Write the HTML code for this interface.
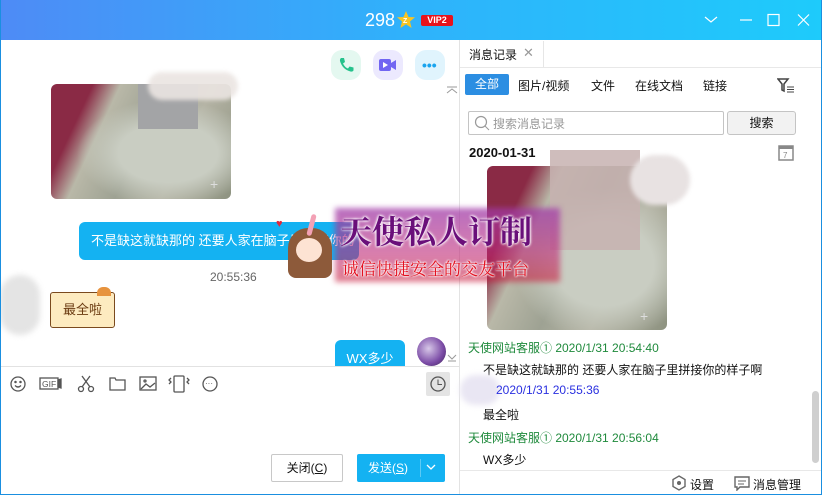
<!DOCTYPE html>
<html><head><meta charset="utf-8"><style>
*{margin:0;padding:0;box-sizing:border-box}
body{width:822px;height:495px;overflow:hidden;background:#fff;font-family:"Liberation Sans","Noto Sans CJK SC",sans-serif;position:relative;font-size:12px;color:#111}
.a{position:absolute}
.win{position:absolute;left:0;top:0;width:822px;height:495px;border:1px solid #1a8fe0;border-top:none}
.title{left:0;top:0;width:822px;height:40px;background:linear-gradient(90deg,#4e8bf6,#2fb2fb 50%,#1ecbfb)}
.img{background:
radial-gradient(ellipse at 65% 60%,#c9cdc2 0 30%,transparent 55%),
linear-gradient(115deg,#8a2a45 0 18%,#b9b8a8 30%,#9ea293 50%,#b4b3a4 70%,#8d9280 100%);border-radius:6px;overflow:hidden}
.ico{stroke:#555;fill:none;stroke-width:1.3}
.g{color:#1f8a3c}
</style></head><body>
<div class="a title"></div>
<div class="a" style="left:365px;top:10px;color:#fff;font-size:18px">298</div>
<svg class="a" style="left:397px;top:11px" width="18" height="17" viewBox="0 0 18 17"><polygon points="9,0 11.5,6 18,6.3 13,10.5 14.6,17 9,13.3 3.4,17 5,10.5 0,6.3 6.5,6" fill="#f7c423"/><text x="6" y="12" font-size="7" fill="#fff" font-weight="bold">Z</text></svg>
<div class="a" style="left:421px;top:15px;width:32px;height:11px;background:#e8131b;border-radius:2px;color:#fff;font-size:9px;font-weight:bold;line-height:11px;text-align:center">VIP2</div>
<svg class="a" style="left:704px;top:13px" width="110" height="14"><g stroke="#fff" stroke-width="1.2" fill="none"><path d="M1 4 l6 5 l6-5"/><path d="M36 7 h12"/><rect x="64" y="1.5" width="11" height="11"/><path d="M94 1.5 l11 11 M105 1.5 l-11 11"/></g></svg>

<div class="a" style="left:459px;top:40px;width:1px;height:455px;background:#e3e3e3"></div>
<div class="a" style="left:331px;top:50px;width:30px;height:30px;border-radius:11px;background:#e4f8f0"></div>
<svg class="a" style="left:338px;top:57px" width="16" height="16" viewBox="0 0 16 16"><path d="M3 1 l3 0 l1 4 l-2 1.5 q2 4 5 5 l1.5-2 l4 1 l0 3 q-1 1.5-3 1 q-8-2-10.5-10.5 q-.3-2 1-3z" fill="#26c28c"/></svg>
<div class="a" style="left:373px;top:50px;width:30px;height:30px;border-radius:11px;background:#ece9fe"></div>
<svg class="a" style="left:379px;top:58px" width="18" height="14"><rect x="0" y="1" width="12" height="12" rx="2" fill="#7165f2"/><path d="M12 5 l5-3 v10 l-5-3z" fill="#7165f2"/><path d="M4 4 l5 3 l-5 3z" fill="#fff"/></svg>
<div class="a" style="left:415px;top:50px;width:30px;height:30px;border-radius:11px;background:#e0f4fd"></div>
<div class="a" style="left:422px;top:57px;color:#1aa4ee;font-size:14px;font-weight:bold">•••</div>
<svg class="a" style="left:446px;top:86px" width="12" height="8"><path d="M1 1 h10 M1 7 l5-4 l5 4" stroke="#999" fill="none"/></svg>

<div class="a img" style="left:51px;top:84px;width:180px;height:115px"></div>
<div class="a" style="left:138px;top:84px;width:60px;height:45px;background:#a3a4a6"></div>
<div class="a" style="left:148px;top:72px;width:90px;height:28px;border-radius:14px;background:#ebe5e2;opacity:.9;filter:blur(2px)"></div>
<div class="a" style="left:210px;top:176px;color:#ddd;font-size:14px">+</div>

<div class="a" style="left:79px;top:222px;width:280px;height:38px;background:#14b2f2;border-radius:6px;color:#fff;font-size:13px;line-height:38px;padding-left:12px">不是缺这就缺那的 还要人家在脑子里拼接你的</div>
<div class="a" style="left:210px;top:270px;color:#666;font-size:12px">20:55:36</div>
<div class="a" style="left:0;top:275px;width:40px;height:60px;border-radius:20px;background:#e4e4e4;filter:blur(3px)"></div>
<div class="a" style="left:50px;top:292px;width:65px;height:36px;background:#fdebc0;border:1.5px solid #7a4a1e;border-radius:3px;color:#6a3a10;font-size:13px;line-height:34px;text-align:center">最全啦</div>
<div class="a" style="left:97px;top:287px;width:14px;height:9px;background:#e7933e;border-radius:6px 6px 0 0"></div>
<div class="a" style="left:335px;top:340px;width:70px;height:26px;background:#14b2f2;border-radius:6px 6px 0 0;color:#fff;font-size:13px;line-height:38px;text-align:center;overflow:hidden">WX多少</div>
<div class="a" style="left:417px;top:337px;width:29px;height:29px;border-radius:50%;background:radial-gradient(circle at 40% 40%,#d7c7e8,#7a4aa5 60%,#3b2450)"></div>
<svg class="a" style="left:447px;top:354px" width="10" height="8"><path d="M1 1 l4 4 l4-4 M1 7 h8" stroke="#999" fill="none"/></svg>

<div class="a" style="left:1px;top:366px;width:458px;height:1px;background:#e2e2e2"></div>
<svg class="a" style="left:8px;top:374px" width="220" height="20"><g class="ico"><circle cx="10" cy="10" r="7"/><path d="M7 11.5 q3 3 6 0"/><circle cx="7.5" cy="8" r=".6"/><circle cx="12.5" cy="8" r=".6"/>
<rect x="32" y="4" width="18" height="11"/><text x="34" y="13" font-size="8.5" fill="#555" stroke="none">GIF</text><path d="M50 6 l3-1 v9 l-3-1z" fill="#555"/>
<circle cx="73" cy="15" r="2.5"/><circle cx="83" cy="15" r="2.5"/><path d="M74 13 l8-11 M82 13 l-8-11"/>
<path d="M102 4 h5 l1 2 h9 v10 h-15z"/><rect x="132" y="3" width="16" height="13"/><path d="M133 15 l5-5 l4 3 l5-4"/><circle cx="137" cy="7" r="1"/>
<rect x="166" y="2" width="10" height="16" rx="1"/><path d="M163 4 l-2 2 l2 2 l-2 2 M179 4 l2 2 l-2 2 l2 2"/>
<circle cx="202" cy="10" r="7"/></g><text x="197" y="12" font-size="8" fill="#555">···</text></svg>
<div class="a" style="left:426px;top:372px;width:24px;height:24px;background:#e4e4e4;border-radius:2px"></div>
<svg class="a" style="left:429px;top:375px" width="18" height="18"><circle cx="9" cy="9" r="7" stroke="#555" fill="none" stroke-width="1.3"/><path d="M9 4.5 v5 h4" stroke="#555" fill="none"/></svg>
<div class="a" style="left:271px;top:454px;width:72px;height:28px;border:1px solid #c8c8c8;border-radius:2px;text-align:center;line-height:26px;font-size:12px">关闭(<u>C</u>)</div>
<div class="a" style="left:357px;top:454px;width:88px;height:28px;background:#14b2f2;border-radius:2px;color:#fff;font-size:12px;line-height:28px;padding-left:11px">发送(<u>S</u>)</div>
<div class="a" style="left:420px;top:459px;width:1px;height:18px;background:#5ccaf5"></div>
<svg class="a" style="left:426px;top:464px" width="10" height="7"><path d="M1 1 l4 4 l4-4" stroke="#fff" fill="none" stroke-width="1.3"/></svg>

<div class="a" style="left:460px;top:67px;width:361px;height:1px;background:#e8e8e8"></div>
<div class="a" style="left:543px;top:41px;width:1px;height:26px;background:#e6e6e6"></div>
<div class="a" style="left:469px;top:46px;font-size:12px">消息记录</div>
<div class="a" style="left:523px;top:45px;color:#999;font-size:13px">✕</div>
<div class="a" style="left:465px;top:74px;width:44px;height:21px;background:#2c8ee2;border-radius:2px;color:#fff;text-align:center;line-height:21px">全部</div>
<div class="a" style="left:518px;top:77px">图片/视频</div>
<div class="a" style="left:591px;top:77px">文件</div>
<div class="a" style="left:635px;top:77px">在线文档</div>
<div class="a" style="left:703px;top:77px">链接</div>
<svg class="a" style="left:777px;top:78px" width="18" height="15"><path d="M1 1 h10 l-4 5 v7 l-2-1 v-6z" fill="none" stroke="#444" stroke-width="1.5"/><path d="M10 9 h7 M10 11.5 h7 M10 14 h7" stroke="#444"/></svg>
<div class="a" style="left:468px;top:111px;width:256px;height:24px;border:1px solid #c4c4c4;border-radius:2px"></div>
<svg class="a" style="left:474px;top:115px" width="16" height="16"><circle cx="7" cy="7" r="5.5" stroke="#999" fill="none" stroke-width="1.2"/><path d="M11 11 l4 4" stroke="#999"/></svg>
<div class="a" style="left:493px;top:115px;color:#999">搜索消息记录</div>
<div class="a" style="left:727px;top:111px;width:69px;height:24px;border:1px solid #c4c4c4;border-radius:3px;background:#f2f2f2;text-align:center;line-height:22px">搜索</div>
<div class="a" style="left:469px;top:145px;font-weight:bold;font-size:13px">2020-01-31</div>
<svg class="a" style="left:778px;top:144px" width="16" height="17"><rect x="1" y="2" width="14" height="14" fill="none" stroke="#888" stroke-width="1.5"/><rect x="1" y="2" width="14" height="3" fill="#888"/><text x="5" y="14" font-size="8" fill="#888">7</text></svg>
<div class="a img" style="left:487px;top:166px;width:180px;height:164px"></div>
<div class="a" style="left:550px;top:150px;width:90px;height:100px;background:#c7b2b0;opacity:.85"></div>
<div class="a" style="left:630px;top:155px;width:60px;height:50px;border-radius:25px;background:#e8e2e2;filter:blur(2px)"></div>
<div class="a" style="left:640px;top:308px;color:#ddd;font-size:14px">+</div>
<div class="a g" style="left:468px;top:339px;font-size:12px">天使网站客服① 2020/1/31 20:54:40</div>
<div class="a" style="left:483px;top:361px">不是缺这就缺那的 还要人家在脑子里拼接你的样子啊</div>
<div class="a" style="left:460px;top:375px;width:40px;height:30px;border-radius:15px;background:#e9e6f3;filter:blur(3px)"></div>
<div class="a" style="left:496px;top:383px;color:#2a30e0">2020/1/31 20:55:36</div>
<div class="a" style="left:483px;top:406px">最全啦</div>
<div class="a g" style="left:468px;top:429px">天使网站客服① 2020/1/31 20:56:04</div>
<div class="a" style="left:483px;top:451px">WX多少</div>
<div class="a" style="left:812px;top:391px;width:7px;height:72px;background:#cfcfcf;border-radius:4px"></div>
<div class="a" style="left:460px;top:470px;width:361px;height:1px;background:#e8e8e8"></div>
<svg class="a" style="left:671px;top:475px" width="16" height="16"><polygon points="8,1 14,4.5 14,11.5 8,15 2,11.5 2,4.5" fill="none" stroke="#666" stroke-width="1.4"/><circle cx="8" cy="8" r="2" fill="#666"/></svg>
<div class="a" style="left:690px;top:476px">设置</div>
<svg class="a" style="left:734px;top:475px" width="16" height="16"><path d="M1 2 h14 v10 h-9 l-3 3 v-3 h-2z" fill="none" stroke="#666" stroke-width="1.4"/><path d="M4 6 h8 M4 9 h6" stroke="#666"/></svg>
<div class="a" style="left:753px;top:476px">消息管理</div>

<!-- watermark on top -->
<div class="a" style="left:335px;top:208px;width:225px;height:74px;background:linear-gradient(180deg,rgba(160,60,170,.75),rgba(190,40,120,.6) 60%,rgba(200,20,50,.55));filter:blur(3px)"></div>
<div class="a" style="left:340px;top:210px;width:215px;font-family:'Noto Serif CJK SC',serif;font-size:32px;line-height:40px;color:#6a0f7a;font-weight:bold;white-space:nowrap;text-shadow:0 0 3px #fff,0 0 3px #fff,0 0 2px #fff">天使私人订制</div>
<div class="a" style="left:342px;top:257px;font-family:'Noto Serif CJK SC',serif;font-size:17px;line-height:22px;color:#e31020;white-space:nowrap;text-shadow:0 0 2px #fff,0 0 2px #fff,0 0 2px #fff">诚信快捷安全的交友平台</div>
<div class="a" style="left:288px;top:228px;width:44px;height:50px;border-radius:20px 20px 8px 8px;background:#8d5a3a"></div>
<div class="a" style="left:296px;top:238px;width:26px;height:24px;border-radius:50%;background:#fde3d3"></div>
<div class="a" style="left:309px;top:214px;width:5px;height:22px;border-radius:3px;background:#f3a1b5;transform:rotate(15deg)"></div>
<div class="a" style="left:276px;top:218px;color:#e2273b;font-size:11px">♥</div>
<div class="win"></div>
</body></html>
